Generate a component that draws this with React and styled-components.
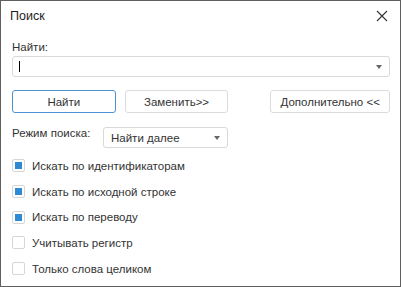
import React from "react";
import styled, {createGlobalStyle} from "styled-components";

const Global = createGlobalStyle`
    html, body {
        margin: 0;
        padding: 0;
        background: #fff;
    }
    * {
        box-sizing: border-box;
    }
`;

const Window = styled.div`
    width: 401px;
    height: 287px;
    border: 1px solid #5f5f5f;
    background: #fff;
    font-family: "Liberation Sans", Arial, sans-serif;
    font-size: 11px;
    color: #333;
    display: flex;
    flex-direction: column;
`;

const TitleBar = styled.div`
    height: 31px;
    display: flex;
    align-items: center;
    justify-content: space-between;
    padding: 0 12px 1px 9px;
`;

const Title = styled.span`
    font-size: 12.5px;
    color: #222;
`;

const Close = styled.button`
    border: none;
    background: none;
    padding: 0;
    width: 12px;
    height: 12px;
    display: flex;
    cursor: pointer;
`;

const Body = styled.div`
    padding: 7px 10px 0 11px;
    display: flex;
    flex-direction: column;
`;

const Label = styled.div`
    height: 16px;
    line-height: 16px;
    font-size: 11.5px;
`;

const Combo = styled.div`
    height: 21px;
    margin-top: 1px;
    border: 1px solid #d9d9d9;
    border-radius: 3px;
    display: flex;
    align-items: center;
    justify-content: space-between;
    padding: 0 7px 0 ${(p) => p.padLeft || "8px"};
    width: ${(p) => p.width || "auto"};
    font-size: 11.5px;
`;

const Caret = styled.span`
    width: 1px;
    height: 11px;
    background: #000;
`;

const Arrow = styled.span`
    width: 0;
    height: 0;
    border-left: 3.5px solid transparent;
    border-right: 3.5px solid transparent;
    border-top: 4px solid #666;
`;

const ButtonRow = styled.div`
    display: flex;
    margin-top: 13px;
    gap: 9px;
`;

const Button = styled.button`
    height: 23px;
    width: ${(p) => p.width};
    margin-left: ${(p) => p.push || "0"};
    border: 1px solid ${(p) => (p.primary ? "#4a93d3" : "#dcdcdc")};
    border-radius: 3px;
    background: #fff;
    font-family: inherit;
    font-size: 11.5px;
    color: #333;
    padding: 0;
`;

const ModeRow = styled.div`
    display: flex;
    align-items: flex-start;
    margin-top: 13px;
`;

const ModeLabel = styled.span`
    width: 91px;
    line-height: 14px;
    font-size: 11.5px;
`;

const List = styled.div`
    display: flex;
    flex-direction: column;
    margin-top: 5px;
`;

const CheckRow = styled.label`
    display: flex;
    align-items: center;
    height: 25.7px;
    gap: 7px;
    font-size: 11.5px;
`;

const Box = styled.span`
    width: 13px;
    height: 13px;
    border: 1px solid #d6d6d6;
    border-radius: 2px;
    display: flex;
    align-items: center;
    justify-content: center;

    &::after {
        content: "";
        width: 7px;
        height: 7px;
        background: ${(p) => (p.checked ? "#2d8ad3" : "transparent")};
    }
`;

const options = [
    {text: "Искать по идентификаторам", checked: true},
    {text: "Искать по исходной строке", checked: true},
    {text: "Искать по переводу", checked: true},
    {text: "Учитывать регистр", checked: false},
    {text: "Только слова целиком", checked: false},
];

const App = () => {
    return (
        <>
            <Global />
            <Window>
                <TitleBar>
                    <Title>Поиск</Title>
                    <Close>
                        <svg width="12" height="12" viewBox="0 0 12 12">
                            <path d="M1 1L11 11M11 1L1 11" stroke="#333" strokeWidth="1.1" />
                        </svg>
                    </Close>
                </TitleBar>
                <Body>
                    <Label>Найти:</Label>
                    <Combo padLeft="6px">
                        <Caret />
                        <Arrow />
                    </Combo>
                    <ButtonRow>
                        <Button primary width="104px">Найти</Button>
                        <Button width="104px">Заменить&gt;&gt;</Button>
                        <Button width="120px" push="33px">Дополнительно &lt;&lt;</Button>
                    </ButtonRow>
                    <ModeRow>
                        <ModeLabel>Режим поиска:</ModeLabel>
                        <Combo width="125px" padLeft="7px">
                            <span>Найти далее</span>
                            <Arrow />
                        </Combo>
                    </ModeRow>
                    <List>
                        {options.map((o) => (
                            <CheckRow key={o.text}>
                                <Box checked={o.checked} />
                                <span>{o.text}</span>
                            </CheckRow>
                        ))}
                    </List>
                </Body>
            </Window>
        </>
    );
};

export default App;
